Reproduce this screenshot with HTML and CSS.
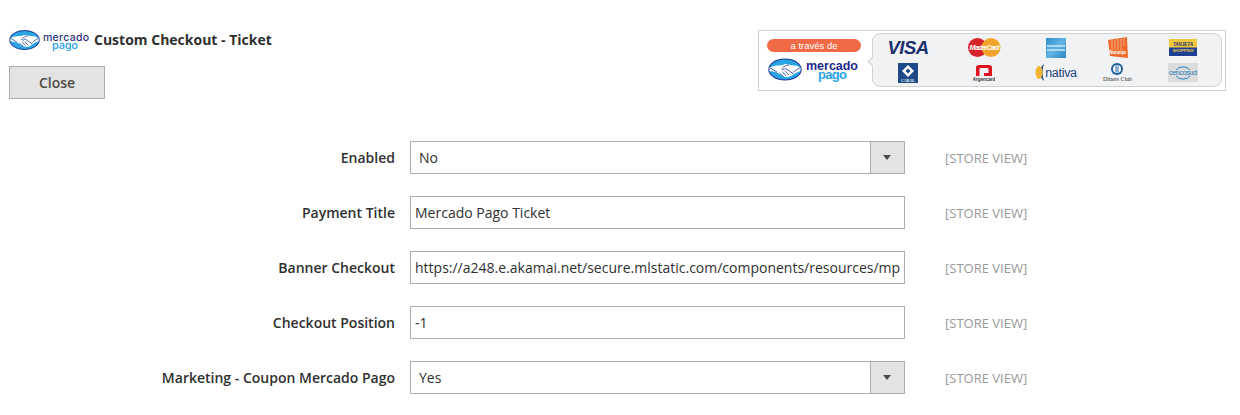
FILE: index.html
```html
<!DOCTYPE html>
<html lang="en">
<head>
    <meta charset="UTF-8">
    <title>Custom Checkout - Ticket</title>
    <link rel="stylesheet" href="styles.css">
</head>
<body>
    <svg class="defs" width="0" height="0">
        <symbol id="hands" viewBox="0 0 60 40">
            <ellipse cx="30" cy="20" rx="29.500" ry="19.500" fill="#20409a"/>
            <ellipse cx="30" cy="20" rx="27.500" ry="17.500" fill="#2aa4e4"/>
            <path d="M2.500 17 C12 11 20 14 28 11 C31 10 34 10 37 11 C44 14 50 11 57.500 17 L57 23 C52 24 49 26 46 28 C42 31 38 33 34 33.500 C28 34 23 30 19 27 C14 24 8 23 3 23 Z" fill="#ffffff"/>
            <path d="M3 17 C8 19 12 22 16 25 M57 17 C52 19 49 21 45 25 M37 12 C32 12 29 14 25 18 C24 21 28 21 31 18 C36 21 41 25 45 28 M20 26 L27 32 M25 24 L32 31 M30 23 L37 30" fill="none" stroke="#20409a" stroke-width="1.500"/>
        </symbol>
    </svg>

    <header class="top">
        <div class="top-left">
            <div class="title-row">
                <svg class="mp-logo" width="85" height="24" viewBox="0 0 85 24">
                    <use href="#hands" width="31" height="22"/>
                    <text x="34" y="12" font-size="10.500" font-weight="500" fill="#2d3277" textLength="46">mercado</text>
                    <text x="43" y="19.500" font-size="11" font-weight="500" fill="#2aa4e4" textLength="26">pago</text>
                </svg>
                <strong class="title">Custom Checkout - Ticket</strong>
            </div>
            <button class="close-btn">Close</button>
        </div>

        <div class="banner">
            <div class="banner-left">
                <div class="via-pill">a través de</div>
                <svg class="banner-logo" width="92" height="26" viewBox="0 0 92 26">
                    <use href="#hands" x="1" y="1" width="34" height="23"/>
                    <text x="39" y="12.500" font-size="12.500" font-weight="bold" fill="#1d2a8c" textLength="52">mercado</text>
                    <text x="51" y="22" font-size="13" font-weight="bold" fill="#2aa4e4" textLength="29">pago</text>
                </svg>
            </div>
            <div class="cards">
                <span class="visa">VISA</span>
                <svg width="33" height="19" viewBox="0 0 33 19">
                    <circle cx="9.500" cy="9.500" r="9.500" fill="#d8232a"/>
                    <circle cx="23" cy="9.500" r="9.500" fill="#f2a32c"/>
                    <text x="16.500" y="12" font-size="7" fill="#ffffff" text-anchor="middle" font-family="Liberation Sans" font-weight="bold" font-style="italic" textLength="30">MasterCard</text>
                </svg>
                <svg width="20" height="20" viewBox="0 0 20 20">
                    <defs>
                        <linearGradient id="amex" x1="0" y1="0" x2="1" y2="1">
                            <stop offset="0" stop-color="#2f8fcb"/>
                            <stop offset="0.5" stop-color="#62b3e2"/>
                            <stop offset="1" stop-color="#2a86c4"/>
                        </linearGradient>
                    </defs>
                    <rect width="20" height="20" fill="url(#amex)"/>
                    <rect x="1" y="7" width="18" height="2" fill="#a9d8f2"/>
                    <rect x="1" y="11" width="18" height="2" fill="#a9d8f2"/>
                </svg>
                <svg width="20" height="21" viewBox="0 0 20 21">
                    <path d="M0 3 L19 0 L20 21 L2 19 Z" fill="#ee6b2d"/>
                    <path d="M4 3 V13 M7 3 V13 M10 2 V13 M13 2 V13 M16 1 V9" stroke="#f8b48c" stroke-width="0.900"/>
                    <text x="9.500" y="16.500" font-size="4.500" fill="#ffffff" text-anchor="middle" font-family="Liberation Sans" font-weight="bold">Naranja</text>
                </svg>
                <svg width="28" height="17" viewBox="0 0 28 17">
                    <rect width="28" height="17" fill="#1c3f94"/>
                    <rect width="28" height="8.500" fill="#efc83f"/>
                    <text x="14" y="7" font-size="4.500" fill="#1c2f6e" text-anchor="middle" font-family="Liberation Sans" font-weight="bold" font-style="italic">TARJETA</text>
                    <text x="14" y="12.500" font-size="4" fill="#efc83f" text-anchor="middle" font-family="Liberation Sans" font-weight="bold" font-style="italic">SHOPPING</text>
                </svg>
                <svg width="20" height="20" viewBox="0 0 20 20">
                    <rect width="20" height="20" fill="#1e4a8a"/>
                    <path d="M10 2 L16 8 L10 14 L4 8 Z" fill="#ffffff"/>
                    <path d="M10 5.500 L12.500 8 L10 10.500 L7.500 8 Z" fill="#1e4a8a"/>
                    <text x="10" y="18.500" font-size="4" fill="#ffffff" text-anchor="middle" font-family="Liberation Serif" font-weight="bold">CABAL</text>
                </svg>
                <svg width="22" height="18" viewBox="0 0 22 18">
                    <path d="M3 12 V4 Q3 1 6 1 H16 Q19 1 19 4 V12 H11 V9 H15.500 V5 Q15.500 4 14.500 4 H7.500 Q6.500 4 6.500 5 V12 Z" fill="#e3141f"/>
                    <text x="11" y="17" font-size="4.500" fill="#333333" text-anchor="middle" font-family="Liberation Sans" font-weight="bold">Argencard</text>
                </svg>
                <div class="nativa">
                    <svg width="10" height="17" viewBox="0 0 10 17">
                        <path d="M9 0 C4 3 4 14 9 17 C7 12 7 5 9 0 Z" fill="#1d3f7c"/>
                        <ellipse cx="4" cy="8.500" rx="3.500" ry="6.500" fill="#f2b632"/>
                    </svg>
                    <span>nativa</span>
                </div>
                <div class="diners">
                    <svg width="12" height="12" viewBox="0 0 12 12">
                        <circle cx="6" cy="6" r="6" fill="#1c5fa0"/>
                        <circle cx="6" cy="6" r="4" fill="#ffffff"/>
                        <rect x="4.500" y="2.500" width="1" height="7" fill="#1c5fa0"/>
                        <rect x="6.500" y="2.500" width="1" height="7" fill="#1c5fa0"/>
                    </svg>
                    <span>Diners Club</span>
                </div>
                <svg width="30" height="19" viewBox="0 0 30 19">
                    <rect width="30" height="19" fill="#dcdcdc"/>
                    <path d="M8 7 A8 6 0 0 1 22 7 M8 13 A8 6 0 0 0 22 13" fill="none" stroke="#2e86c6" stroke-width="1"/>
                    <text x="15" y="12" font-size="7" fill="#2378b8" text-anchor="middle" font-family="Liberation Sans" textLength="28">cencosud</text>
                </svg>
            </div>
        </div>
    </header>

    <main class="form">
        <div class="row">
            <label>Enabled</label>
            <div class="select"><span class="select-val">No</span><span class="select-btn"></span></div>
            <span class="scope">[STORE VIEW]</span>
        </div>
        <div class="row">
            <label>Payment Title</label>
            <input class="text" type="text" value="Mercado Pago Ticket">
            <span class="scope">[STORE VIEW]</span>
        </div>
        <div class="row">
            <label>Banner Checkout</label>
            <input class="text" type="text" value="https://a248.e.akamai.net/secure.mlstatic.com/components/resources/mp/css/assets/desktop-logo-mercadopago.png">
            <span class="scope">[STORE VIEW]</span>
        </div>
        <div class="row">
            <label>Checkout Position</label>
            <input class="text" type="text" value="-1">
            <span class="scope">[STORE VIEW]</span>
        </div>
        <div class="row">
            <label>Marketing - Coupon Mercado Pago</label>
            <div class="select"><span class="select-val">Yes</span><span class="select-btn"></span></div>
            <span class="scope">[STORE VIEW]</span>
        </div>
    </main>
</body>
</html>
```

FILE: styles.css
```css
body {
    font-family: "Open Sans", sans-serif;
    font-size: 14px;
    color: #303030;
    margin: 0;
    padding: 0;
    background-color: #ffffff;
    overflow: hidden;
}
.defs {
    display: block;
}
.top {
    display: flex;
    justify-content: space-between;
    padding: 29px 14px 0 9px;
}
.title-row {
    display: flex;
    align-items: flex-start;
    height: 22px;
}
.mp-logo {
    font-family: "Inter", sans-serif;
}
.title {
    font-size: 14px;
    font-weight: 700;
    color: #303030;
    line-height: 22px;
}
.close-btn {
    display: block;
    width: 96px;
    height: 33px;
    margin-top: 15px;
    padding: 0;
    font-family: "Open Sans", sans-serif;
    font-size: 14px;
    font-weight: 600;
    color: #514943;
    background-color: #e3e3e3;
    border: 1px solid #adadad;
}
.banner {
    display: flex;
    width: 468px;
    height: 61px;
    margin-top: 1px;
    box-sizing: border-box;
    padding: 2px 3px 3px 8px;
    border: 1px solid #d2d2d2;
}
.banner-left {
    width: 94px;
    margin-right: 11px;
    padding-top: 6px;
}
.via-pill {
    height: 13px;
    line-height: 13px;
    text-align: center;
    font-family: "Liberation Sans", sans-serif;
    font-size: 9.500px;
    color: #ffffff;
    background-color: #f26a45;
    border-radius: 7px;
}
.banner-logo {
    display: block;
    margin-top: 5px;
    font-family: "Liberation Sans", sans-serif;
}
.cards {
    position: relative;
    flex: 1;
    min-width: 0;
    box-sizing: border-box;
    padding-right: 3px;
    display: grid;
    grid-template-columns: 70px 82px 62px 61px 1fr;
    grid-template-rows: 25px 25px;
    align-items: center;
    justify-items: center;
    align-content: center;
    background-color: #f1f2f4;
    border: 1px solid #d2d2d2;
    border-radius: 8px;
}
/* little notch pointing at the logo */
.cards::before {
    content: "";
    position: absolute;
    left: -4px;
    top: 24px;
    width: 6px;
    height: 6px;
    background-color: #f1f2f4;
    border-left: 1px solid #d2d2d2;
    border-bottom: 1px solid #d2d2d2;
    transform: rotate(45deg);
}
.visa {
    font-family: "Liberation Sans", sans-serif;
    font-weight: bold;
    font-style: italic;
    font-size: 18.500px;
    letter-spacing: -0.5px;
    color: #1c2f6e;
}
.nativa {
    display: flex;
    align-items: center;
    font-family: "Liberation Sans", sans-serif;
    font-size: 12.500px;
    letter-spacing: -0.3px;
    color: #1d3f7c;
}
.diners {
    display: flex;
    flex-direction: column;
    align-items: center;
    font-family: "Liberation Serif", serif;
    font-size: 6px;
    line-height: 8px;
    white-space: nowrap;
    color: #333333;
}
.diners svg {
    display: block;
}
.form {
    padding-top: 42px;
}
.row {
    display: flex;
    align-items: center;
    height: 33px;
    margin-bottom: 22px;
}
.row label {
    width: 395px;
    font-weight: 600;
    text-align: right;
    margin-right: 15px;
}
.text, .select {
    width: 495px;
    height: 33px;
    box-sizing: border-box;
    font-family: "Open Sans", sans-serif;
    font-size: 14px;
    color: #303030;
    background-color: #ffffff;
    border: 1px solid #adadad;
}
.text {
    padding: 0 4px;
    outline: none;
}
.select {
    display: flex;
    align-items: center;
}
.select-val {
    flex: 1;
    padding-left: 8px;
}
.select-btn {
    position: relative;
    width: 33px;
    height: 31px;
    background-color: #e3e3e3;
    border-left: 1px solid #adadad;
}
.select-btn::after {
    content: "";
    position: absolute;
    top: 13px;
    left: 12px;
    border-top: 5px solid #514943;
    border-left: 4px solid transparent;
    border-right: 4px solid transparent;
}
.scope {
    margin-left: 40px;
    padding-top: 1px;
    font-size: 13px;
    color: #999999;
}
```
